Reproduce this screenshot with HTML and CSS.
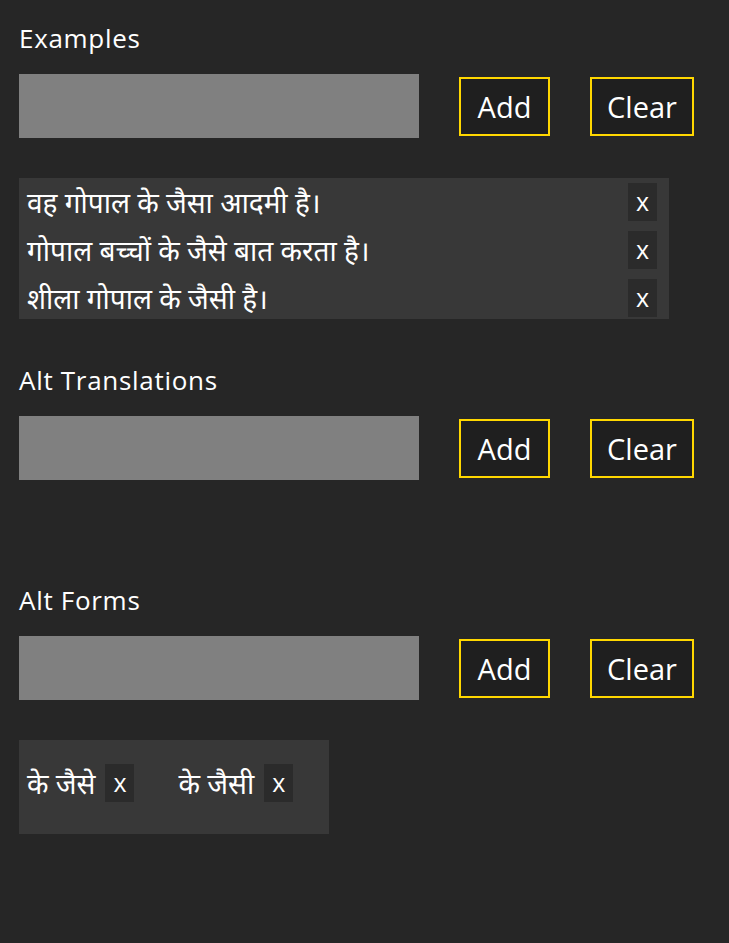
FILE: index.html
```html
<!DOCTYPE html>
<html lang="hi">
<head>
<meta charset="utf-8">
<title>Word editor</title>
<link rel="stylesheet" href="styles.css">
</head>
<body>
<main class="page">
  <section class="section">
    <div class="label">Examples</div>
    <div class="entry-row">
      <div class="input"></div>
      <button class="btn btn-add">Add</button>
      <button class="btn btn-clear">Clear</button>
    </div>
    <div class="list">
      <div class="list-row"><span class="item-text">वह गोपाल के जैसा आदमी है।</span><span class="remove">x</span></div>
      <div class="list-row"><span class="item-text">गोपाल बच्चों के जैसे बात करता है।</span><span class="remove">x</span></div>
      <div class="list-row"><span class="item-text">शीला गोपाल के जैसी है।</span><span class="remove">x</span></div>
    </div>
  </section>

  <section class="section section-trans">
    <div class="label">Alt Translations</div>
    <div class="entry-row">
      <div class="input"></div>
      <button class="btn btn-add">Add</button>
      <button class="btn btn-clear">Clear</button>
    </div>
  </section>

  <section class="section section-forms">
    <div class="label">Alt Forms</div>
    <div class="entry-row">
      <div class="input"></div>
      <button class="btn btn-add">Add</button>
      <button class="btn btn-clear">Clear</button>
    </div>
    <div class="chips">
      <div class="chip"><span class="item-text">के जैसे</span><span class="remove">x</span></div>
      <div class="chip"><span class="item-text">के जैसी</span><span class="remove">x</span></div>
    </div>
  </section>
</main>
</body>
</html>
```
FILE: styles.css
```css
html, body {
  margin: 0;
  padding: 0;
  background: #262626;
  color: #ffffff;
  font-family: "Open Sans", "Noto Sans", "Noto Sans Devanagari", sans-serif;
}
.page {
  padding: 18px 0 0 19px;
}
.section {
  display: flex;
  flex-direction: column;
  align-items: flex-start;
}
.label {
  font-size: 26px;
  letter-spacing: 0.7px;
  line-height: 40px;
  height: 40px;
  margin-bottom: 16px;
}
.entry-row {
  display: flex;
  align-items: center;
  gap: 40px;
}
.input {
  width: 400px;
  height: 64px;
  background: #808080;
}
.btn {
  height: 59px;
  box-sizing: border-box;
  border: 2px solid #ffd700;
  background: #1f1f1f;
  color: #ffffff;
  font-family: inherit;
  font-size: 29px;
  padding: 0;
  margin: 0;
}
.btn-add { width: 91px; }
.btn-clear { width: 104px; }
.list {
  margin-top: 40px;
  width: 650px;
  box-sizing: border-box;
  background: #383838;
  padding: 5px 12px 2px 8px;
  display: flex;
  flex-direction: column;
  gap: 10px;
}
.list-row {
  display: flex;
  align-items: center;
  justify-content: space-between;
  height: 38px;
}
.item-text {
  font-size: 28px;
  line-height: 38px;
  white-space: nowrap;
}
.remove {
  width: 29px;
  height: 38px;
  background: #2b2b2b;
  display: flex;
  align-items: center;
  justify-content: center;
  font-size: 25px;
  line-height: 1;
  padding-bottom: 2px;
  box-sizing: border-box;
}
.section-trans {
  margin-top: 41px;
}
.section-forms {
  margin-top: 100px;
}
.chips {
  margin-top: 40px;
  width: 310px;
  height: 94px;
  box-sizing: border-box;
  background: #383838;
  padding: 24px 8px 0 8px;
  display: flex;
  align-items: flex-start;
  gap: 44px;
}
.chip {
  display: flex;
  align-items: center;
  gap: 10px;
}
```
